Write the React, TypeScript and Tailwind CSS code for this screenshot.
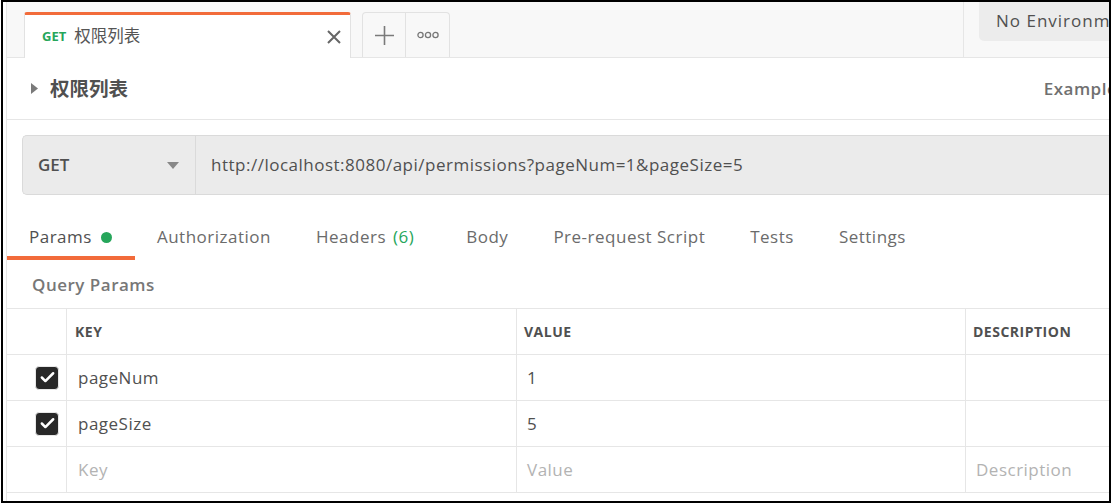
import { Check } from 'lucide-react';

const font = { fontFamily: '"Open Sans", "Noto Sans CJK SC", sans-serif' };

const tabs = [
  { label: 'Params', dot: true },
  { label: 'Authorization' },
  { label: 'Headers', count: '(6)' },
  { label: 'Body' },
  { label: 'Pre-request Script' },
  { label: 'Tests' },
  { label: 'Settings' },
];

const rows = [
  { key: 'pageNum', value: '1', checked: true },
  { key: 'pageSize', value: '5', checked: true },
];

const TabBar = () => (
  <div className="flex h-[56px] shrink-0 bg-[#f8f8f8] border-b border-[#e6e6e6]">
    <div className="flex items-end pl-[17px]">
      <div className="relative -mb-px flex h-[46px] w-[327px] items-center border-x border-t-[3px] border-x-[#e2e2e2] border-t-[#f26b3a] bg-white rounded-t-[3px] pl-[17px] pr-[8px]">
        <span className="text-[13px] font-bold text-[#26a65b] mr-[8px]">GET</span>
        <span className="text-[16.5px] text-[#555]">权限列表</span>
        <svg className="ml-auto mr-[1px]" width="14" height="14" viewBox="0 0 14 14">
          <path d="M1 1 L13 13 M13 1 L1 13" stroke="#666" strokeWidth="2" />
        </svg>
      </div>
      <div className="ml-[11px] flex h-[45px]">
        <div className="flex w-[44px] items-center justify-center border border-b-0 border-[#e2e2e2] rounded-tl-[4px]">
          <svg width="19" height="19" viewBox="0 0 19 19">
            <path d="M9.5 0 V19 M0 9.5 H19" stroke="#7a7a7a" strokeWidth="1.6" />
          </svg>
        </div>
        <div className="flex w-[44px] items-center justify-center border border-l-0 border-b-0 border-[#e2e2e2] rounded-tr-[4px]">
          <svg width="22" height="8" viewBox="0 0 22 8">
            <circle cx="3.5" cy="4" r="2.6" fill="none" stroke="#777" strokeWidth="1.3" />
            <circle cx="11" cy="4" r="2.6" fill="none" stroke="#777" strokeWidth="1.3" />
            <circle cx="18.5" cy="4" r="2.6" fill="none" stroke="#777" strokeWidth="1.3" />
          </svg>
        </div>
      </div>
    </div>
    <div className="ml-auto flex w-[146px] shrink-0 border-l border-[#e6e6e6]">
      <div className="ml-[15px] flex h-[39px] flex-1 items-center rounded-bl-[5px] bg-[#ececec] pb-[1px] pl-[17px] text-[17px] tracking-[1px] text-[#505050] whitespace-nowrap overflow-hidden">
        No Environment
      </div>
    </div>
  </div>
);

export default function App() {
  return (
    <div className="w-[1112px] h-[504px] bg-white overflow-hidden" style={font}>
      <div className="ml-[1px] flex h-[503px] w-[1110px] overflow-hidden border-2 border-black">
        <div className="w-[3px] shrink-0 bg-white" />
        <div className="flex min-w-0 flex-1 flex-col border-l border-[#e6e6e6]">
          <TabBar />

          <div className="flex h-[62px] shrink-0 items-center border-b border-[#e6e6e6] pl-[24px]">
            <svg width="7" height="11" viewBox="0 0 7 11">
              <path d="M0 0 L7 5.5 L0 11 Z" fill="#7a7a7a" />
            </svg>
            <span className="ml-[12px] text-[19.5px] font-bold text-[#505050]">权限列表</span>
            <span className="ml-auto -mr-[17px] whitespace-nowrap text-[17px] font-semibold tracking-[0.5px] text-[#707070]">Examples</span>
          </div>

          <div className="ml-[15px] mt-[15px] flex h-[60px] shrink-0 rounded-l-[5px] border border-r-0 border-[#dadada] bg-[#ebebeb]">
            <div className="flex w-[173px] items-center border-r border-[#dadada] pl-[15px] pr-[16px]">
              <span className="text-[17px] font-semibold text-[#505050]">GET</span>
              <svg className="ml-auto" width="12" height="7" viewBox="0 0 12 7">
                <path d="M0 0 H12 L6 7 Z" fill="#888" />
              </svg>
            </div>
            <div className="flex items-center pl-[15px] text-[17px] tracking-[0.5px] text-[#505050] whitespace-nowrap">
              http://localhost:8080/api/permissions?pageNum=1&amp;pageSize=5
            </div>
          </div>

          <div className="mt-[21px] flex h-[44px] shrink-0">
            {tabs.map((t, i) => (
              <div
                key={t.label}
                className={`flex items-center pl-[22px] pt-[2px] text-[17px] tracking-[0.5px] border-b-4 ${i === 0 ? 'border-[#f26b3a] text-[#505050]' : 'border-transparent text-[#6b6b6b]'} ${t.count ? 'pr-[30px]' : 'pr-[23px]'}`}
              >
                {t.label}
                {t.count && <span className="ml-[7px] text-[#26a65b]">{t.count}</span>}
                {t.dot && <span className="ml-[9px] h-[11px] w-[11px] rounded-full bg-[#26a65b]" />}
              </div>
            ))}
          </div>

          <div className="flex h-[48px] shrink-0 items-center pl-[25px] pt-[1px] text-[17px] font-semibold tracking-[0.5px] text-[#777]">
            Query Params
          </div>

          <div className="grid grid-cols-[60px_450px_449px_1fr] border-t border-[#e6e6e6] text-[#505050]">
            <div className="h-[46px] border-b border-r border-[#e6e6e6]" />
            <div className="flex h-[46px] items-center border-b border-r border-[#e6e6e6] pl-[8px] text-[14px] font-bold tracking-[0.5px]">KEY</div>
            <div className="flex h-[46px] items-center border-b border-r border-[#e6e6e6] pl-[7px] text-[14px] font-bold tracking-[0.5px]">VALUE</div>
            <div className="flex h-[46px] items-center border-b border-[#e6e6e6] pl-[7px] text-[14px] font-bold tracking-[0.5px] whitespace-nowrap">DESCRIPTION</div>

            {rows.map((r) => (
              <div key={r.key} className="contents">
                <div className="flex h-[46px] items-center justify-end border-b border-r border-[#e6e6e6] pr-[7px]">
                  <span className="flex h-[24px] w-[24px] items-center justify-center rounded-[4px] border border-[#e8e8e8] bg-[#282828]">
                    <Check size={17} strokeWidth={3.5} color="#fff" />
                  </span>
                </div>
                <div className="flex h-[46px] items-center border-b border-r border-[#e6e6e6] pl-[11px] text-[17px] tracking-[0.5px]">{r.key}</div>
                <div className="flex h-[46px] items-center border-b border-r border-[#e6e6e6] pl-[10px] text-[17px] tracking-[0.5px]">{r.value}</div>
                <div className="h-[46px] border-b border-[#e6e6e6]" />
              </div>
            ))}

            <div className="h-[46px] border-b border-r border-[#e6e6e6]" />
            <div className="flex h-[46px] items-center border-b border-r border-[#e6e6e6] pl-[11px] text-[17px] tracking-[0.5px] text-[#b3b3b3]">Key</div>
            <div className="flex h-[46px] items-center border-b border-r border-[#e6e6e6] pl-[10px] text-[17px] tracking-[0.5px] text-[#b3b3b3]">Value</div>
            <div className="flex h-[46px] items-center border-b border-[#e6e6e6] pl-[10px] text-[17px] tracking-[0.5px] text-[#b3b3b3] whitespace-nowrap">Description</div>
          </div>
        </div>
      </div>
    </div>
  );
}
